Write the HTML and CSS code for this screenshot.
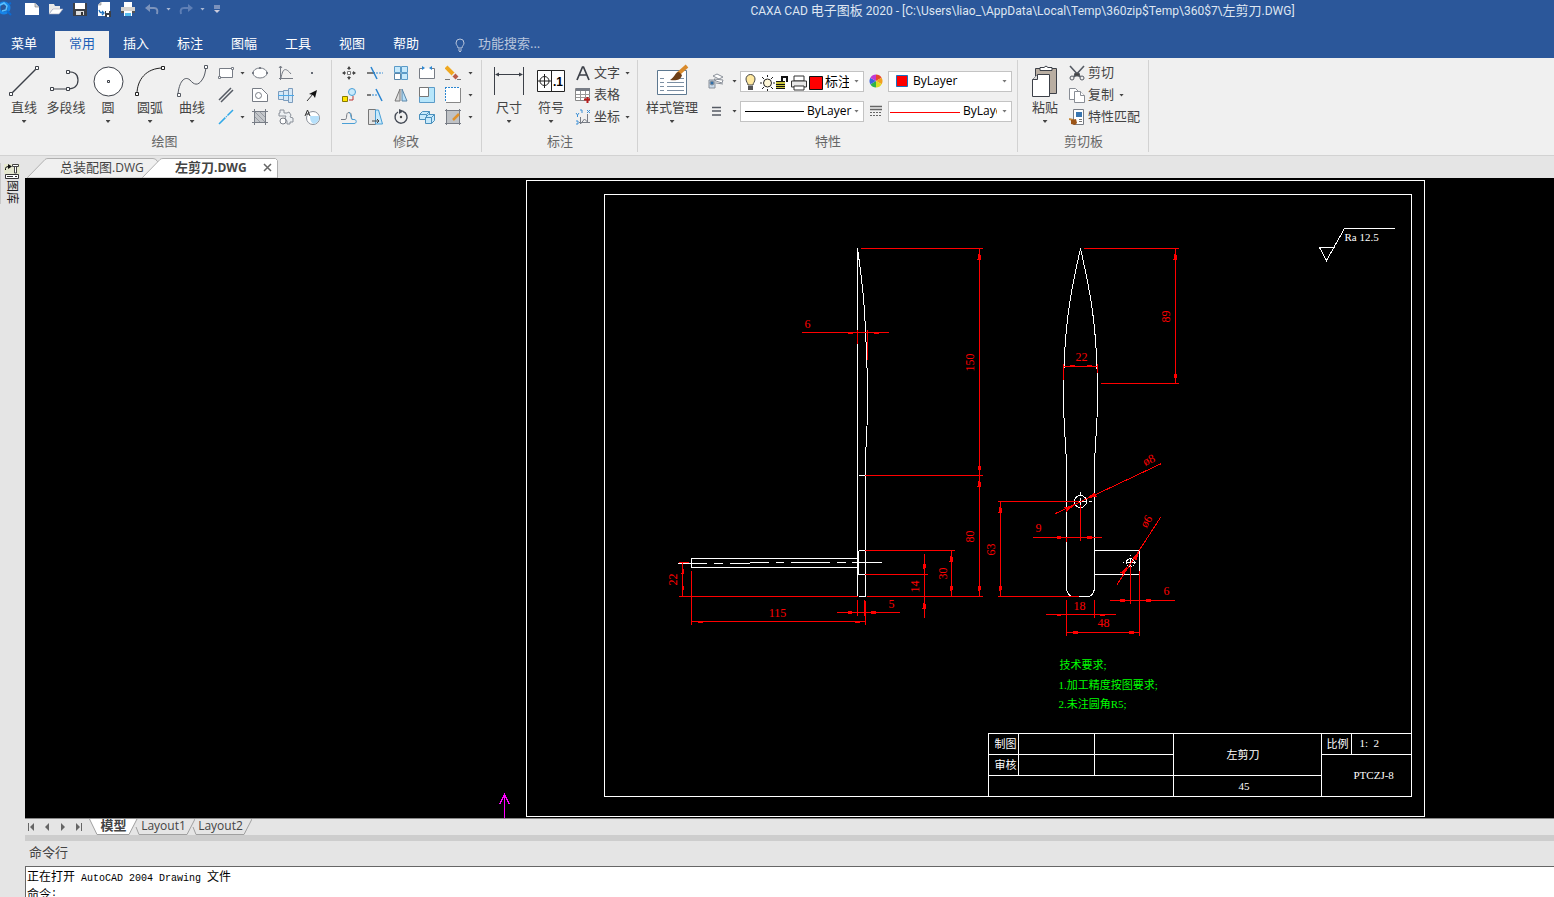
FILE: index.html
```html
<!DOCTYPE html>
<html lang="zh-CN">
<head>
<meta charset="utf-8">
<title>CAXA CAD 电子图板 2020</title>
<link rel="stylesheet" href="styles.css">
</head>
<body>
<header class="header">
  <div class="titlebar">
    <svg class="logo" width="14" height="18" viewBox="0 0 14 18"><circle cx="4" cy="8" r="5" fill="none" stroke="#1684e8" stroke-width="3"/><path d="M0 5l4-2 3 3-1 4-4 1" fill="none" stroke="#5cc0ff" stroke-width="1.5"/><path d="M7 11l4 4M9 4l2-1" stroke="#0d6ad0" stroke-width="2"/></svg>
    <div class="quick">
      <button class="qa" aria-label="新建"><svg width="18" height="16" viewBox="0 0 18 16"><path d="M2 2h10l4 4v8H2z" fill="#fff"/><path d="M12 2v4h4" fill="#d8d8d8" stroke="#777" stroke-width=".6"/></svg></button>
      <button class="qa" aria-label="打开"><svg width="18" height="16" viewBox="0 0 18 16"><path d="M2 3h5l1 2h5v3H6l-4 5z" fill="#e9e9e9"/><path d="M2 13l4-5h10l-4 5z" fill="#fff" stroke="#aab" stroke-width=".6"/></svg></button>
      <button class="qa" aria-label="保存"><svg width="18" height="16" viewBox="0 0 18 16"><path d="M2 2h14v13H2z" fill="#3b3f47"/><path d="M4 2h10v6H4z" fill="#fff"/><path d="M5 10h8v4H5z" fill="#ddd"/><path d="M10 11h2v3h-2z" fill="#333"/></svg></button>
      <button class="qa" aria-label="另存为"><svg width="18" height="16" viewBox="0 0 18 16"><path d="M6 1h9v14H3V4z" fill="#fff"/><path d="M3 4h3V1" fill="#ccc" stroke="#888" stroke-width=".6"/><path d="M4 9c1 3 2 3 5 3M7 10l2 2-2 2" fill="none" stroke="#1b70c0" stroke-width="1.3"/><path d="M10 10h6v6h-6z" fill="#3b3f47"/><path d="M11 10h3v2h-3zM12 14h2v2h-2z" fill="#fff"/></svg></button>
      <button class="qa" aria-label="打印"><svg width="18" height="16" viewBox="0 0 18 16"><path d="M5 1h8v5H5z" fill="#fff"/><path d="M2 6h14v6H2z" fill="#d6d3cf"/><path d="M2 10h14v2H2z" fill="#555"/><path d="M5 10h8v5H5z" fill="#fff"/><path d="M6 12h6v3H6z" fill="#55bdf0"/></svg></button>
      <button class="qa" aria-label="撤销"><svg width="18" height="16" viewBox="0 0 18 16"><path d="M4 7h7c3 0 4 2 3 6" fill="none" stroke="#7d94bc" stroke-width="2"/><path d="M2 7l5-4v8z" fill="#7d94bc"/></svg></button>
      <i class="drop light"></i>
      <button class="qa" aria-label="重做"><svg width="18" height="16" viewBox="0 0 18 16"><path d="M14 7H7c-3 0-4 2-3 6" fill="none" stroke="#5f7fb5" stroke-width="2"/><path d="M16 7l-5-4v8z" fill="#5f7fb5"/></svg></button>
      <i class="drop light"></i>
      <button class="qa narrow" aria-label="自定义"><svg width="8" height="10" viewBox="0 0 8 10"><path d="M1 2h6M1 4h6" stroke="#ccd"/><path d="M1 6h6L4 9z" fill="#ccd"/></svg></button>
    </div>
    <h1 class="title">CAXA CAD <span class="cjk">电子图板</span> 2020 - [C:\Users\liao_\AppData\Local\Temp\360zip$Temp\360$7\<span class="cjk">左剪刀</span>.DWG]</h1>
  </div>
  <nav class="menu">
    <button class="menu-tab first">菜单</button>
    <button class="menu-tab active">常用</button>
    <button class="menu-tab">插入</button>
    <button class="menu-tab">标注</button>
    <button class="menu-tab">图幅</button>
    <button class="menu-tab">工具</button>
    <button class="menu-tab">视图</button>
    <button class="menu-tab">帮助</button>
    <label class="search">
      <svg width="12" height="14" viewBox="0 0 12 14" fill="none" stroke="#b9c6dd"><path d="M4 10c0-2-2-3-2-5a4 4 0 0 1 8 0c0 2-2 3-2 5zM4 12h4M5 13.500h2"/></svg>
      <input type="text" placeholder="功能搜索..." aria-label="功能搜索">
    </label>
  </nav>
</header>

<section class="ribbon">
  <div class="group draw">
    <div class="tools">
      <button class="big"><svg width="36" height="36" viewBox="0 0 36 36" fill="none" stroke="#3c4048"><path d="M6 30L30 6" stroke-width="1.5"/><path d="M3.500 29.500h3v3h-3zM29.500 3.500h3v3h-3z" fill="#fff"/></svg><span>直线</span><i class="drop"></i></button>
      <button class="big"><svg width="36" height="36" viewBox="0 0 36 36" fill="none" stroke="#3c4048"><path d="M5 26h14q11 0 11-9t-11-8" stroke-width="1.200"/><path d="M2.500 24.500h3v3h-3zM18.500 24.500h3v3h-3zM18.500 7.500h3v3h-3z" fill="#fff"/></svg><span>多段线</span></button>
      <button class="big"><svg width="36" height="36" viewBox="0 0 36 36" fill="#fff" stroke="#3c4048"><circle cx="18.500" cy="18.500" r="14.500"/><path d="M17.500 17.500h2v2h-2z"/></svg><span>圆</span><i class="drop"></i></button>
      <button class="big"><svg width="36" height="36" viewBox="0 0 36 36" fill="none" stroke="#222"><path d="M5 31C5 17 14 5 31 5"/><path d="M3.500 29.500h3v3h-3zM29.500 3.500h3v3h-3z" fill="#fff"/></svg><span>圆弧</span><i class="drop"></i></button>
      <button class="big"><svg width="36" height="36" viewBox="0 0 36 36" fill="none" stroke="#555a63"><path d="M4 31C5 20 10 12 16 17c4 5 8 6 12 0 3-4 3-8 4-12"/><path d="M3.500 30.500h3v3h-3zM30.500 2.500h3v3h-3z" fill="#fff"/></svg><span>曲线</span><i class="drop"></i></button>
      <div class="icons draw-icons">
        <button class="ic" aria-label="矩形"><svg width="16" height="16" viewBox="0 0 16 16"><path d="M1.500 3.500h13v9h-13z" fill="#fff" stroke="#777c85"/><path d="M.5 11.500h2v2h-2zM13.500 2.500h2v2h-2z" fill="#fff" stroke="#777c85"/></svg></button><i class="drop"></i>
        <button class="ic" aria-label="椭圆"><svg width="16" height="16" viewBox="0 0 16 16"><ellipse cx="8" cy="8" rx="7" ry="5" fill="#fff" stroke="#777c85"/><path d="M0 7h2v2H0zM14 7h2v2h-2zM7 2h2v2H7z" fill="#777c85"/></svg></button>
        <button class="ic" aria-label="公式曲线"><svg width="16" height="16" viewBox="0 0 16 16" fill="none" stroke="#777c85"><path d="M2.500 1v14M1 13.500h14M3 13C5 2 8 3 13 9M1 3l1.500-2L4 3"/></svg></button>
        <button class="ic" aria-label="点"><svg width="16" height="16" viewBox="0 0 16 16"><path d="M7 7h2v2H7z" fill="#666b75"/></svg></button>
        <button class="ic" aria-label="平行线"><svg width="16" height="16" viewBox="0 0 16 16" stroke="#555a63"><path d="M1 13L13 1M3 15L15 3" stroke-width="1.500"/></svg></button><i></i>
        <button class="ic" aria-label="轮廓"><svg width="16" height="16" viewBox="0 0 16 16" fill="#fff" stroke="#777c85"><path d="M.5 1.500h9l6 6v7H.5z"/><circle cx="6.500" cy="8.500" r="3"/></svg></button>
        <button class="ic" aria-label="轴孔"><svg width="16" height="16" viewBox="0 0 16 16" fill="#d5e8f7" stroke="#7c9cbd"><path d="M.5 4.500h5v8h-5zM5.500 3.500h5v10h-5zM10.500 1.500h4v14h-4z"/><path d="M0 8.500h16" stroke="#4aa8e8"/></svg></button>
        <button class="ic" aria-label="箭头"><svg width="16" height="16" viewBox="0 0 16 16"><path d="M3 14l6-7" stroke="#333"/><path d="M13 3l-2 8-2-3-4-1z" fill="#111"/></svg></button>
        <button class="ic" aria-label="构造线"><svg width="16" height="16" viewBox="0 0 16 16"><path d="M1 15L15 1" stroke="#31a9e8" stroke-width="1.500" stroke-dasharray="9 1 1 1"/></svg></button><i class="drop"></i>
        <button class="ic" aria-label="填充"><svg width="16" height="16" viewBox="0 0 16 16" stroke="#777c85"><path d="M2.500 2.500h11v11h-11z" fill="#c3c6ca"/><path d="M0 2.500h16M0 13.500h16M2.500 0v16M13.500 0v16" fill="none"/><path d="M3 8l5 5M3 3l10 10M8 3l5 5" stroke-width=".6"/></svg></button>
        <button class="ic" aria-label="齿轮"><svg width="16" height="16" viewBox="0 0 16 16"><path d="M2 1h4v3h3l2-1 2 3-1 2 3 1v4h-3v2H9v-3l-2-3 1-2H5L4 7H1V4h1z" fill="#eceff2" stroke="#8a9099"/><circle cx="5" cy="12" r="3" fill="#fff" stroke="#777c85"/></svg></button>
        <button class="ic" aria-label="局部放大"><svg width="16" height="16" viewBox="0 0 16 16"><circle cx="9" cy="9" r="6.500" fill="#fff" stroke="#8a9099"/><path d="M6 7h9c1 4-2 7-5 8-3-1-4-4-4-8z" fill="#b7e0fa"/><path d="M1 7l2.500-6L6 7M2 5h3" fill="none" stroke="#333"/></svg></button>
      </div>
    </div>
    <div class="group-name">绘图</div>
  </div>

  <div class="group modify">
    <div class="tools">
      <div class="icons modify-icons">
        <button class="ic" aria-label="移动"><svg width="16" height="16" viewBox="0 0 16 16"><path d="M6.500 6.500h3v3h-3z" fill="#fff" stroke="#777"/><path d="M8 1l2 3H6zM8 15l2-3H6zM1 8l3-2v4zM15 8l-3-2v4z" fill="#444"/><path d="M8 2v3M8 11v3M2 8h3M11 8h3" stroke="#444"/></svg></button>
        <button class="ic" aria-label="裁剪"><svg width="16" height="16" viewBox="0 0 16 16"><path d="M0 8h8" stroke="#555" stroke-width="1.500"/><path d="M9 8h7" stroke="#3b8fd6" stroke-dasharray="2 1"/><path d="M4 2l6 12" stroke="#2b86d1" stroke-width="1.500"/></svg></button>
        <button class="ic" aria-label="阵列"><svg width="16" height="16" viewBox="0 0 16 16"><path d="M1.500 1.500h6v6h-6zM8.500 1.500h6v6h-6zM8.500 8.500h6v6h-6z" fill="#c7e9fb" stroke="#5b9bc8"/><path d="M1.500 8.500h6v6h-6z" fill="#fff" stroke="#5b86a8"/></svg></button>
        <button class="ic" aria-label="打断"><svg width="16" height="16" viewBox="0 0 16 16"><path d="M4 3.500H.5v10h15v-10H12" fill="#fff" stroke="#777c85"/><path d="M3 1l3 2-3 2zM13 1l-3 2 3 2z" fill="#2b86d1"/></svg></button>
        <button class="ic" aria-label="删除"><svg width="16" height="16" viewBox="0 0 16 16"><path d="M1 2l8 8" stroke="#efa820" stroke-width="4"/><path d="M8 9l2 2" stroke="#eee" stroke-width="4"/><path d="M9 10l3 3" stroke="#b95c48" stroke-width="4"/><path d="M0 14.500h5M12 14.500h4" stroke="#777"/></svg></button><i class="drop"></i>
        <button class="ic" aria-label="平移复制"><svg width="16" height="16" viewBox="0 0 16 16"><circle cx="11" cy="5" r="3.500" fill="#c7e9fb" stroke="#4a9fd6"/><path d="M1.500 9.500h5v5h-5z" fill="#ffe500" stroke="#887a00"/><path d="M8 13h4V9" fill="none" stroke="#b33"/></svg></button>
        <button class="ic" aria-label="延伸"><svg width="16" height="16" viewBox="0 0 16 16"><path d="M0 8h4" stroke="#555" stroke-width="1.500"/><path d="M5 8h6" stroke="#2b86d1" stroke-dasharray="2 1"/><path d="M9 2l6 12" stroke="#2b86d1" stroke-width="1.500"/></svg></button>
        <button class="ic" aria-label="镜像"><svg width="16" height="16" viewBox="0 0 16 16"><path d="M7 2v12H2z" fill="#ddd" stroke="#777"/><path d="M9 2v12h5z" fill="#b7e0fa" stroke="#5b86a8"/></svg></button>
        <button class="ic" aria-label="缩放"><svg width="16" height="16" viewBox="0 0 16 16"><path d="M.5 .5h15v15H.5z" fill="#b7e6fb" stroke="#5b9bc8"/><path d="M.5 .5h9v9h-9z" fill="#fff" stroke="#777"/></svg></button>
        <button class="ic" aria-label="拉伸"><svg width="16" height="16" viewBox="0 0 16 16"><path d="M.5 .5h15v15H.5z" fill="#fff"/><path d="M0 .5h15M.5 0v15" fill="none" stroke="#2b86d1" stroke-dasharray="2 1"/><path d="M1 15.500h14.500V1" fill="none" stroke="#888"/></svg></button><i class="drop"></i>
        <button class="ic" aria-label="等距线"><svg width="16" height="16" viewBox="0 0 16 16" fill="none"><path d="M0 10.500h4c3 0 0-7 4-7s1 7 4 7h1" stroke="#777c85"/><path d="M1 14.500h12c3 0 3-4 0-4h-2c-1 0-1-7-3-7" stroke="#4a9fd6"/></svg></button>
        <button class="ic" aria-label="拔模"><svg width="16" height="16" viewBox="0 0 16 16"><path d="M1.500 .5h7v15h-7z" fill="#e3e3e3" stroke="#777"/><path d="M8.500 1h3l4 14h-7z" fill="#c7e9fb" stroke="#4a9fd6"/><path d="M5 12h7m-2-2l2 2-2 2" stroke="#444" fill="none"/></svg></button>
        <button class="ic" aria-label="旋转"><svg width="16" height="16" viewBox="0 0 16 16"><path d="M5 3a6 6 0 1 0 5-.5" fill="none" stroke="#444a55" stroke-width="1.400"/><path d="M6 0l5 2-5 3z" fill="#444a55"/><circle cx="8" cy="8" r="1.200" fill="#444"/></svg></button>
        <button class="ic" aria-label="分解"><svg width="16" height="16" viewBox="0 0 16 16" fill="#c7e9fb" stroke="#4a90bd"><path d="M.5 5.500l3-3h7v5l-3 3h-7zM.5 5.500h7v5M7.500 5.500l3-3"/><path d="M6.500 8.500l3-3h6v6l-3 3h-6zM6.500 8.500h6v6M12.500 8.500l3-3"/></svg></button>
        <button class="ic" aria-label="编辑填充"><svg width="16" height="16" viewBox="0 0 16 16"><path d="M1.500 1.500h13v13h-13z" fill="#bfc2c6" stroke="#777c85"/><path d="M0 1.500h16M0 14.500h16M1.500 0v16M14.500 0v16" stroke="#777c85"/><path d="M8 11l6-6" stroke="#e0922c" stroke-width="2.500"/></svg></button><i class="drop"></i>
      </div>
    </div>
    <div class="group-name">修改</div>
  </div>

  <div class="group annotate">
    <div class="tools">
      <button class="big"><svg width="36" height="36" viewBox="0 0 36 36" stroke="#3c4048" fill="#3c4048"><path d="M3.500 4v28M32.500 4v28M5 11.500h26"/><path d="M4 11.500l4-2v4zM32 11.500l-4-2v4z" stroke="none"/></svg><span>尺寸</span><i class="drop"></i></button>
      <button class="big"><svg width="36" height="36" viewBox="0 0 36 36" stroke="#222" fill="none"><path d="M4.500 7.500h27v21h-27zM18.500 7v21" fill="#fff"/><circle cx="11.500" cy="18" r="4.500"/><path d="M5 18h13M11.500 11v14"/><text class="tol" x="20" y="23">.1</text></svg><span>符号</span><i class="drop"></i></button>
      <div class="rows">
        <button class="small"><svg width="16" height="16" viewBox="0 0 16 16" fill="none" stroke="#3c4048" stroke-width="1.700"><path d="M2 15L7.500 2h1L14 15M4 10h8"/></svg><span>文字</span><i class="drop"></i></button>
        <button class="small"><svg width="16" height="16" viewBox="0 0 16 16"><path d="M.5 1.500h14v12H.5z" fill="#fff" stroke="#888"/><path d="M1 1h14v3H1z" fill="#777c85"/><path d="M5.500 4v9M10.500 4v9M1 7.500h14M1 10.500h14" stroke="#999"/><path d="M9 12.500h6M12.500 10v6" stroke="#b81c1c" stroke-width="2"/></svg><span>表格</span></button>
        <button class="small"><svg width="16" height="16" viewBox="0 0 16 16" fill="none"><path d="M4 13.500h11M5.500 8v7l4-5 3 3V5" stroke="#777c85"/><path d="M1 4l1.500 2L4 4M2.500 6v2M5 1h2v3M12 1l3 3M15 1l-3 3M1 12h2v3H1" stroke="#3b8fd6"/></svg><span>坐标</span><i class="drop"></i></button>
      </div>
    </div>
    <div class="group-name">标注</div>
  </div>

  <div class="group props">
    <div class="tools">
      <button class="big wide"><svg width="36" height="36" viewBox="0 0 36 36"><path d="M3.500 7.500h29v24h-29z" fill="#fff" stroke="#5d7890"/><path d="M6 15.500h4M6 19.500h4M6 23.500h4M6 27.500h4M13 19.500h17M13 23.500h17M13 27.500h17M22 15.500h8" stroke="#7c8fa3"/><path d="M33 3L24 11" stroke="#d98a2b" stroke-width="4"/><path d="M25 9c-4 0-4 5-9 8 6 1 11 0 12-5z" fill="#6e3f16"/></svg><span>样式管理</span><i class="drop"></i></button>
      <div class="fields">
        <button class="mini" aria-label="图层"><svg width="16" height="16" viewBox="0 0 16 16" fill="#fff" stroke="#8a9099"><path d="M5 3l4-2 6 3-4 2zM6 6l9 1-1 3-6-2zM8 10l7 1"/><path d="M1 7h6v8H1z" fill="#c7d9ea"/><circle cx="4" cy="10" r="2" fill="#2f6ea8"/></svg><i class="drop"></i></button>
        <label class="combo"><select class="layer-select" aria-label="当前图层"><option>标注</option></select>
          <svg class="combo-art" width="84" height="19" viewBox="0 0 84 19"><path d="M7 13c0-2-2-3-2-6a4 4 0 0 1 9 0c0 3-2 4-2 6z" fill="#ffe9a0" stroke="#444"/><path d="M7 14h5v4H7z" fill="#555"/><circle cx="26.500" cy="11" r="4" fill="#fff8d8" stroke="#222"/><path d="M26.500 3v2M26.500 17v2M19 11h2M32 11h2M21 5l2 2M32 5l-2 2M21 17l2-2M32 17l-2-2" stroke="#222"/><path d="M35 9h9v8h-9z" fill="#c9c43a"/><path d="M35 9.500h9M35 12.500h9M35 14.500h9M35 16.500h9" stroke="#111"/><path d="M41 9V5h5v5" fill="none" stroke="#111" stroke-width="2"/><path d="M53 4h10v5H53z" fill="#fff" stroke="#333"/><path d="M50.500 9h15v6h-15z" fill="#e8e8e8" stroke="#333"/><path d="M53 14h10v4H53z" fill="#fff" stroke="#333"/><path d="M68.500 4.500h13v13h-13z" fill="#f00" stroke="#111"/></svg><i class="drop gray"></i></label>
        <svg class="field-icon" width="16" height="16" viewBox="0 0 16 16"><path d="M8 8V1.500A6.500 6.500 0 0 1 13.600 4.700z" fill="#e8482c"/><path d="M8 8l5.600-3.300a6.500 6.500 0 0 1 0 6.500z" fill="#f2a01d"/><path d="M8 8l5.600 3.200A6.500 6.500 0 0 1 8 14.500z" fill="#d9dd23"/><path d="M8 8v6.500a6.500 6.500 0 0 1-5.600-3.300z" fill="#2db34a"/><path d="M8 8l-5.600 3.200a6.500 6.500 0 0 1 0-6.500z" fill="#3c63e0"/><path d="M8 8L2.400 4.700A6.500 6.500 0 0 1 8 1.500z" fill="#c23ad2"/></svg>
        <label class="combo"><select class="color-select" aria-label="颜色"><option>ByLayer</option></select>
          <svg class="combo-art" width="24" height="19" viewBox="0 0 24 19"><path d="M7.500 3.500h11v11h-11z" fill="#f00" stroke="#1b70c0"/></svg><i class="drop gray"></i></label>
        <button class="mini" aria-label="线型"><svg width="16" height="16" viewBox="0 0 16 16" stroke="#555a63"><path d="M4 4.500h9M4 8h9M4 12h9" stroke-width="1.500"/></svg><i class="drop"></i></button>
        <label class="combo"><select class="line-select" aria-label="线型选择"><option>ByLayer</option></select>
          <svg class="combo-art" width="66" height="19" viewBox="0 0 66 19"><path d="M4 9.500h59" stroke="#000"/></svg><i class="drop gray"></i></label>
        <svg class="field-icon" width="16" height="16" viewBox="0 0 16 16" stroke="#666"><path d="M2 3.500h12M2 6.500h12" stroke-width="1.500"/><path d="M2 9.500h12M2 12.500h12" stroke-dasharray="2 1"/></svg>
        <label class="combo"><select class="width-select" aria-label="线宽"><option>ByLayer</option></select>
          <svg class="combo-art" width="72" height="19" viewBox="0 0 72 19"><path d="M1 10.500h70" stroke="#f00"/></svg><i class="drop gray"></i></label>
      </div>
    </div>
    <div class="group-name">特性</div>
  </div>

  <div class="group clip">
    <div class="tools">
      <button class="big"><svg width="36" height="36" viewBox="0 0 36 36" stroke="#3c4048"><path d="M8.500 5.500h21v25h-21z" fill="#b9aea2"/><path d="M13 7.500v-3h4l2-1.500 2 1.500h4v3z" fill="#fff"/><path d="M5.500 16.500l5-5h12v22h-17z" fill="#fff"/><path d="M5.500 16.500h5v-5" fill="#ddd"/></svg><span>粘贴</span><i class="drop"></i></button>
      <div class="rows">
        <button class="small"><svg width="16" height="16" viewBox="0 0 16 16" fill="none" stroke="#555a63"><path d="M1 1l10 11M15 1L5 12" stroke-width="1.600"/><path d="M6 8h4l1 3H5z" fill="#444"/><circle cx="3" cy="13" r="2"/><circle cx="13" cy="13" r="2"/></svg><span>剪切</span></button>
        <button class="small"><svg width="16" height="16" viewBox="0 0 16 16" fill="#fff" stroke="#888d95"><path d="M.5 1.500h6l3 3v8h-9z"/><path d="M5.500 4.500h6l4 4v7h-10z"/><path d="M11.500 4.500v4h4"/></svg><span>复制</span><i class="drop"></i></button>
        <button class="small"><svg width="16" height="16" viewBox="0 0 16 16"><path d="M4.500 .5h10v15h-10z" fill="#fff" stroke="#777c85"/><path d="M7 3h6v5H7z" fill="#3875b0"/><path d="M10 10.500h3M10 12.500h3" stroke="#777"/><path d="M0 10l4 1" stroke="#c78a3c" stroke-width="2"/><path d="M2 11l5-1 1 4-2 2-4-1z" fill="#9c5518"/></svg><span>特性匹配</span></button>
      </div>
    </div>
    <div class="group-name">剪切板</div>
  </div>
</section>

<div class="body">
  <aside class="side">
    <button class="lib"><svg width="16" height="17" viewBox="0 0 16 17"><path d="M0 1h16v10H0z" fill="#e5e8cf"/><path d="M1.500 7V5.500q0-2 3-2" fill="none" stroke="#111"/><path d="M4 1l4 2.500L4 6z" fill="#111"/><path d="M8.500 1.500h6v2h-6zM10.500 4v6h2V4" fill="#fff" stroke="#444"/><path d="M1.500 11.500h13v4h-13z" fill="#fff" stroke="#333"/><path d="M3 13.500h6M11 13.500h2" stroke="#333"/></svg><span>图库</span></button>
  </aside>
  <main class="work">
    <div class="doc-tabs">
      <button class="doc-tab"><svg class="tab-shape" width="134" height="20" viewBox="0 0 134 20"><path d="M1 20L19 1.500Q20 .5 22 .5H127Q130 .5 131 3L134 6V20z" fill="#f0f0f0" stroke="#b0b0b0"/></svg><span class="lbl"><span class="cjk">总装配图</span>.DWG</span></button>
      <button class="doc-tab active"><svg class="tab-shape" width="137" height="20" viewBox="0 0 137 20"><path d="M1 20L19 1.500Q20 .5 22 .5H134.500L136.500 2.500V20z" fill="#fff" stroke="#b0b0b0"/></svg><span class="lbl"><span class="cjk">左剪刀</span>.DWG</span><svg class="close" width="9" height="9" viewBox="0 0 9 9"><path d="M1 1l7 7M8 1L1 8" stroke="#666" stroke-width="1.500"/></svg></button>
    </div>
    <div class="canvas">
      <svg class="drawing" viewBox="24.500 177.500 1529 640" preserveAspectRatio="xMinYMin meet">
        <g class="w">
          <path d="M526 180H1424V816H526zM604 194H1411V796H604z"/>
          <path d="M988 796V733H1411M1018 733V775M1094 733V775M1173 733V796M1321 733V796M1351 733V754M988 754H1173M988 775H1321M1321 754H1411"/>
          <path d="M1334 247H1319L1326 260L1344 228H1394"/>
          <path d="M857 248V596M857 248C861 275 864 300 865 330C866 350 867 370 867 399C867 420 866 440 865 456V596H858M858 475H864M858 550H864M858 550V574H864"/>
          <path d="M857 558H691V567H857M677 563H706M713 563H722M729 563H749M749 562H768M775 562H783M790 562H829M836 562H845M851 562H881"/>
          <path d="M1080 248C1072 284 1063 320 1063 395C1063 430 1066 445 1066 470V588Q1067 595 1072 596H1088Q1093 595 1094 588V470C1094 445 1097 430 1097 395C1097 320 1088 284 1080 248"/>
          <path d="M1094 550H1139V574H1094M1080 491V494M1080 497V506M1088 501H1091M1076 501H1085M1122 562H1123M1138 562H1139M1130 554V555M1126 562H1135M1130 558V566"/>
          <circle cx="1080" cy="501" r="6"/><circle cx="1130" cy="562" r="4"/>
        </g>
        <g class="r">
          <path d="M860 248H982M864 475H982M864 550H954M864 574H927M678 596H857M866 596H982M979 248V596M951 550V596M924 553V617"/>
          <path d="M678 562H688M682 562V596M691 570V624M865 600V624M691 621H865M836 612H899M857 599V615M864 599V615"/>
          <path d="M801 332H888M857 329V343M867 329V359"/>
          <path d="M1083 248H1178M1100 383H1178M1175 248V383M1063 366H1097M1063 363V379M1097 363V372"/>
          <path d="M997 501H1078M997 596H1078M1000 501V596M1032 537H1101M1080 504V540M1066 537V541"/>
          <path d="M1109 600H1174M1130 565V603M1139 570V635M1045 614H1115M1066 599V635M1094 599V617M1066 632H1139"/>
          <path d="M1055 513L1161 463M1116 585L1160 517"/>
        </g>
        <g class="arrows">
          <path d="M979 249l-2 10h4zM979 474l-2-9h4zM979 476l-2 10h4zM979 595l-2-10h4zM951 551l-2 10h4zM951 595l-2-10h4zM924 573l-2-10h4zM924 598l-2 10h4z"/>
          <path d="M682 563l-1 10h3zM682 595l-1-10h3zM692 621l10-1v3zM864 621l-10-1v3zM856 612l-9-2v4zM866 612l9-2v4zM857 332l-10-1v3zM868 332l10-1v3z"/>
          <path d="M1175 249l-2 10h4zM1175 382l-2-9h4zM1064 366l10-2v3zM1096 366l-10-2v3zM1000 502l-2 10h4zM1000 595l-2-10h4zM1065 537l-9-2v4zM1081 537l10-2v4z"/>
          <path d="M1129 600l-10-2v4zM1140 600l10-2v4zM1065 614l-9-1v3zM1095 614l9-1v3zM1067 632l10-2v4zM1138 632l-10-2v4z"/>
          <path d="M1086 498l8-6 2 4zM1075 504l-11 3 2 4zM1139 550l-7 7 4 3zM1127 566l-4 9-3-3z"/>
        </g>
        <g class="dim">
          <text x="807" y="327">6</text><text x="891" y="607">5</text><text x="777" y="616">115</text>
          <text transform="translate(973 362) rotate(-90)">150</text>
          <text transform="translate(973 536) rotate(-90)">80</text>
          <text transform="translate(994 549) rotate(-90)">63</text>
          <text transform="translate(946 573) rotate(-90)">30</text>
          <text transform="translate(918 586) rotate(-90)">14</text>
          <text transform="translate(676 579) rotate(-90)">22</text>
          <text x="1081" y="360">22</text>
          <text transform="translate(1169 316) rotate(-90)">89</text>
          <text transform="translate(1150 463) rotate(-25)">ø8</text>
          <text transform="translate(1149 523) rotate(-57)">ø6</text>
          <text x="1038" y="531">9</text><text x="1166" y="594">6</text><text x="1079" y="609">18</text><text x="1103" y="626">48</text>
        </g>
        <g class="note">
          <text x="1059" y="668">技术要求;</text>
          <text x="1058" y="688">1.加工精度按图要求;</text>
          <text x="1058" y="707">2.未注圆角R5;</text>
        </g>
        <g class="block">
          <text x="994" y="747">制图</text><text x="994" y="768">审核</text>
          <text x="1226" y="758">左剪刀</text><text x="1238" y="789">45</text>
          <text x="1326" y="747">比例</text><text x="1359" y="746">1:&#160; 2</text>
          <text x="1353" y="778">PTCZJ-8</text><text x="1344" y="240">Ra 12.5</text>
        </g>
        <path d="M504 818V794M499 804L504 794L509 804" class="axis"/>
      </svg>
    </div>
    <div class="sheet-bar">
      <div class="nav">
        <button aria-label="第一个"><svg width="8" height="8" viewBox="0 0 8 8"><path d="M1 0h1v8H1zM7 0v8L3 4z"/></svg></button>
        <button aria-label="上一个"><svg width="8" height="8" viewBox="0 0 8 8"><path d="M6 0v8L2 4z"/></svg></button>
        <button aria-label="下一个"><svg width="8" height="8" viewBox="0 0 8 8"><path d="M2 0v8l4-4z"/></svg></button>
        <button aria-label="最后一个"><svg width="8" height="8" viewBox="0 0 8 8"><path d="M6 0h1v8H6zM1 0v8l4-4z"/></svg></button>
      </div>
      <button class="sheet active"><svg class="tab-shape" width="49" height="16" viewBox="0 0 49 16"><path d="M.5 0L8 15.500H40L48 0" fill="#fff" stroke="#a0a0a0"/></svg><span class="cjk">模型</span></button>
      <button class="sheet l1"><svg class="tab-shape" width="60" height="16" viewBox="0 0 60 16"><path d="M1 8L4 15.500H52L60 0" fill="none" stroke="#a0a0a0"/></svg><span>Layout1</span></button>
      <button class="sheet l2"><svg class="tab-shape" width="60" height="16" viewBox="0 0 60 16"><path d="M1 8L4 15.500H52L60 0" fill="none" stroke="#a0a0a0"/></svg><span>Layout2</span></button>
    </div>
    <div class="splitter"></div>
    <section class="command">
      <h2>命令行</h2>
      <div class="console">
        <p>正在打开<span class="mono"> AutoCAD 2004 Drawing </span>文件</p>
        <label>命令<span class="mono">:</span><input type="text" aria-label="命令"></label>
      </div>
    </section>
  </main>
</div>
</body>
</html>
```
FILE: styles.css
```css
* { box-sizing: border-box; }
body {
  margin: 0;
  height: 100vh;
  display: flex;
  flex-direction: column;
  overflow: hidden;
  background: #e5e5e5;
  color: #444;
  font: 12px/16px "Open Sans", "Noto Sans CJK SC", sans-serif;
}
button, input, select { font: inherit; color: inherit; }
button { border: 0; padding: 0; background: none; }
svg { display: block; flex: none; }
.cjk { font-size: 13px; }

.drop {
  width: 5px;
  height: 3px;
  background: #444;
  clip-path: polygon(0 0, 100% 0, 50% 100%);
  flex: none;
}
.drop.light { background: #a9b7d3; }
.drop.gray { background: #777; }

/* header */
.header { background: #2b579a; color: #fff; flex: none; }
.titlebar { display: flex; height: 31px; align-items: flex-start; }
.logo { flex: none; }
.quick { display: flex; align-items: center; height: 18px; padding-left: 9px; gap: 6px; }
.quick .drop { margin-left: -1px; }
.narrow { margin-left: 2px; }
.title {
  flex: 1;
  margin: 0;
  padding: 2px 0 0 270px;
  text-align: center;
  font: 400 12px/18px Roboto, "Noto Sans CJK SC", sans-serif;
  white-space: nowrap;
  color: #dfe6f1;
}
.menu { display: flex; height: 27px; font-size: 13px; }
.menu-tab { width: 54px; height: 27px; padding-bottom: 4px; }
.menu-tab.first { width: 48px; margin-right: 7px; }
.menu-tab.active { background: #f0f0f0; color: #1b5fb8; }
.search { display: flex; align-items: center; gap: 12px; margin-left: 21px; color: #b9c6dd; }
.search input { width: 120px; border: 0; padding: 0 0 4px; background: none; outline: 0; }
.search input::placeholder { color: #b9c6dd; opacity: 1; }

/* ribbon */
.ribbon {
  display: flex;
  flex: none;
  height: 98px;
  padding: 2px 0 3px;
  background: #f0f0f0;
  border-bottom: 1px solid #d2d2d2;
  font-size: 13px;
}
.group { display: flex; flex-direction: column; border-right: 1px solid #d2d2d2; }
.draw { padding-left: 3px; width: 332px; }
.modify { padding-left: 4px; width: 150px; }
.annotate { padding-left: 6px; width: 156px; }
.props { padding-left: 6px; width: 380px; }
.clip { padding-left: 6px; width: 131px; }
.tools { display: flex; height: 73px; padding-top: 2px; }
.group-name { text-align: center; color: #666; padding-right: 5px; }
.big {
  display: flex;
  flex-direction: column;
  align-items: center;
  width: 42px;
  height: 66px;
  padding-top: 1px;
  white-space: nowrap;
}
.big .drop { margin-top: 5px; }
.wide { width: 56px; }
.tol { font: 700 12px "Liberation Sans", sans-serif; fill: #000; stroke: none; }
.icons { display: grid; grid-auto-rows: 22px; place-items: center; align-content: start; }
.draw-icons { grid-template-columns: 25px 9px 26px 26px 26px; }
.modify-icons { grid-template-columns: repeat(5, 26px) 9px; }
.rows { display: grid; grid-auto-rows: 22px; align-content: start; padding-left: 3px; }
.small { display: flex; align-items: center; gap: 3px; white-space: nowrap; }
.small span { padding-bottom: 2px; }
.small .drop { margin-left: 2px; }
.fields {
  display: grid;
  grid-template-columns: 32px 124px 24px 124px;
  grid-template-rows: 22px 22px;
  row-gap: 8px;
  align-content: start;
  align-items: center;
  padding: 8px 0 0 8px;
}
.mini { display: flex; align-items: center; gap: 8px; }
.field-icon { justify-self: center; }
.combo { position: relative; height: 21px; background: #fff; border: 1px solid #c3c3c3; }
.combo select {
  appearance: none;
  display: block;
  width: 108px;
  height: 19px;
  border: 0;
  background: none;
  color: #000;
  font-size: 12px;
}
.combo .layer-select { padding-left: 84px; font-size: 13px; }
.combo .color-select { padding-left: 24px; }
.combo .line-select { padding-left: 66px; width: 114px; }
.combo .width-select { padding-left: 74px; }
.combo-art { position: absolute; left: 0; top: 0; pointer-events: none; }
.combo .drop { position: absolute; right: 4px; top: 8px; }

/* workspace */
.body { display: flex; flex: 1; min-height: 0; }
.side { width: 25px; flex: none; padding-top: 7px; }
.lib { display: flex; flex-direction: column; align-items: center; width: 23px; border-left: 1px solid #c8c8c8; }
.lib span { writing-mode: vertical-rl; text-orientation: sideways; font-size: 12px; line-height: 14px; color: #222; }
.work { display: flex; flex-direction: column; flex: 1; min-width: 0; }
.doc-tabs { display: flex; height: 22px; padding: 2px 0 0 1px; flex: none; }
.doc-tab { position: relative; display: flex; align-items: center; width: 115px; height: 20px; padding: 0 0 2px 34px; white-space: nowrap; }
.doc-tab.active { width: 137px; font-weight: 700; }
.tab-shape { position: absolute; left: 0; top: 0; }
.doc-tab .lbl { position: relative; }
.close { position: relative; margin-left: 16px; }
.canvas { flex: 1; min-height: 0; background: #000; overflow: hidden; }
.drawing { width: 100%; height: 100%; shape-rendering: crispEdges; }
.w path, .w circle { fill: none; stroke: #fff; }
.r path { fill: none; stroke: #f00; }
.arrows path { fill: #f00; }
.axis { fill: none; stroke: #f0f; }
.dim text { fill: #f00; text-anchor: middle; font: 12px "Liberation Sans Narrow", "Liberation Serif", serif; }
.note text { fill: #0f0; font: 11px "Liberation Sans Narrow", "Liberation Serif", "Noto Sans CJK SC", serif; }
.block text { fill: #fff; font: 11px "Liberation Sans Narrow", "Liberation Serif", "Noto Sans CJK SC", serif; }

.sheet-bar { display: flex; height: 17px; flex: none; border-top: 1px solid #888; }
.nav { display: flex; gap: 8px; padding: 4px 0 0 2px; width: 64px; fill: #666; }
.nav button { height: 8px; }
.sheet { position: relative; height: 16px; padding-bottom: 3px; line-height: 13px; text-align: center; }
.sheet span { position: relative; }
.sheet.active { width: 49px; font-weight: 700; }
.l1, .l2 { width: 57px; margin-left: -3px; }
.l2 { margin-left: 0; }
.splitter { height: 6px; flex: none; background: #cdcdcd; }
.command { flex: none; height: 56px; }
.command h2 { margin: 0; height: 25px; padding-left: 4px; font-size: 13px; line-height: 22px; font-weight: 400; }
.console {
  height: 31px;
  padding: 1px 0 0 1px;
  overflow: hidden;
  background: #fff;
  border-top: 1px solid #666;
  border-left: 1px solid #666;
  color: #000;
  font: 12px/15px "Noto Sans CJK SC", sans-serif;
}
.console p { margin: 0; }
.console label { display: flex; }
.console input { flex: 1; border: 0; padding: 0; outline: 0; background: none; height: 15px; }
.mono { font-family: "Liberation Mono", monospace; font-size: 10px; white-space: pre; }
```
